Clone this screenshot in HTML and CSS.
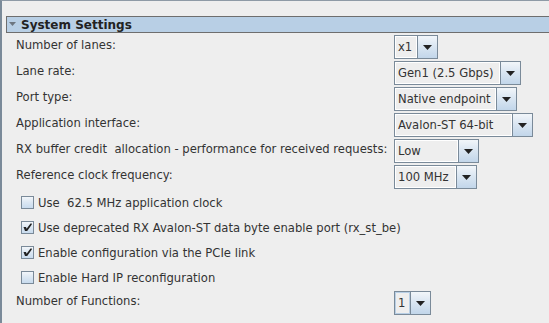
FILE: index.html
```html
<!DOCTYPE html>
<html>
<head>
<meta charset="utf-8">
<link rel="stylesheet" href="styles.css">
</head>
<body>
<div class="frame">
  <div class="section-header">
    <svg class="caret" width="7" height="4" viewBox="0 0 7 4"><polygon points="0,0 7,0 3.5,4" fill="#6d7680"/></svg>
    <span class="section-title">System Settings</span>
  </div>
  <div class="form">
    <div class="row">
      <span class="label">Number of lanes:</span>
      <div class="combo"><span class="combo-value w-lanes">x1</span><span class="combo-btn"><svg width="9" height="5" viewBox="0 0 9 5"><polygon points="0,0 9,0 4.5,5" fill="#222"/></svg></span></div>
    </div>
    <div class="row">
      <span class="label">Lane rate:</span>
      <div class="combo"><span class="combo-value w-rate">Gen1 (2.5 Gbps)</span><span class="combo-btn"><svg width="9" height="5" viewBox="0 0 9 5"><polygon points="0,0 9,0 4.5,5" fill="#222"/></svg></span></div>
    </div>
    <div class="row">
      <span class="label">Port type:</span>
      <div class="combo"><span class="combo-value w-port">Native endpoint</span><span class="combo-btn"><svg width="9" height="5" viewBox="0 0 9 5"><polygon points="0,0 9,0 4.5,5" fill="#222"/></svg></span></div>
    </div>
    <div class="row">
      <span class="label">Application interface:</span>
      <div class="combo"><span class="combo-value w-app">Avalon-ST 64-bit</span><span class="combo-btn"><svg width="9" height="5" viewBox="0 0 9 5"><polygon points="0,0 9,0 4.5,5" fill="#222"/></svg></span></div>
    </div>
    <div class="row">
      <span class="label">RX buffer credit&nbsp; allocation - performance for received requests:</span>
      <div class="combo"><span class="combo-value w-low">Low</span><span class="combo-btn"><svg width="9" height="5" viewBox="0 0 9 5"><polygon points="0,0 9,0 4.5,5" fill="#222"/></svg></span></div>
    </div>
    <div class="row">
      <span class="label">Reference clock frequency:</span>
      <div class="combo"><span class="combo-value w-clk">100 MHz</span><span class="combo-btn"><svg width="9" height="5" viewBox="0 0 9 5"><polygon points="0,0 9,0 4.5,5" fill="#222"/></svg></span></div>
    </div>
  </div>
  <div class="checks">
    <label class="check-row"><span class="checkbox"></span><span class="check-text">Use&nbsp; 62.5 MHz application clock</span></label>
    <label class="check-row"><span class="checkbox"><svg width="11" height="11" viewBox="0 0 11 11"><path d="M1.5 5 L4 5 L4.6 6.8 L8.5 1.5 L9.8 1.5 L9.8 2.6 L5.2 9 L3 9 Z" fill="#222"/></svg></span><span class="check-text">Use deprecated RX Avalon-ST data byte enable port (rx_st_be)</span></label>
    <label class="check-row"><span class="checkbox"><svg width="11" height="11" viewBox="0 0 11 11"><path d="M1.5 5 L4 5 L4.6 6.8 L8.5 1.5 L9.8 1.5 L9.8 2.6 L5.2 9 L3 9 Z" fill="#222"/></svg></span><span class="check-text">Enable configuration via the PCIe link</span></label>
    <label class="check-row"><span class="checkbox"></span><span class="check-text">Enable Hard IP reconfiguration</span></label>
  </div>
  <div class="form last">
    <div class="row">
      <span class="label">Number of Functions:</span>
      <div class="combo"><span class="combo-value w-func focused">1</span><span class="combo-btn"><svg width="9" height="5" viewBox="0 0 9 5"><polygon points="0,0 9,0 4.5,5" fill="#222"/></svg></span></div>
    </div>
  </div>
</div>
</body>
</html>
```
FILE: styles.css
```css
html, body {
  margin: 0;
  padding: 0;
  background: #eeeeee;
}
body {
  width: 549px;
  height: 323px;
  overflow: hidden;
  font-family: "DejaVu Sans", sans-serif;
  font-size: 11.6px;
  color: #333333;
}
.frame {
  height: 323px;
  box-sizing: border-box;
  border-left: 2px solid #7a8a99;
  border-top: 1px solid #8e9aa6;
  padding-top: 15px;
}
.section-header {
  margin-left: 4px;
  height: 15px;
  border: 1px solid #6e6e6e;
  border-right: none;
  background: #b8cfe5;
  display: flex;
  align-items: center;
}
.caret {
  margin-left: 2px;
  margin-right: 5px;
  margin-top: -1px;
}
.section-title {
  font-weight: bold;
  color: #222;
  font-size: 12px;
}
.form {
  display: flex;
  flex-direction: column;
  padding-left: 14px;
  padding-top: 1px;
}
.row {
  display: grid;
  grid-template-columns: 378px auto;
  align-items: center;
  height: 26px;
}
.label {
  white-space: nowrap;
  padding-bottom: 5px;
}
.combo {
  display: flex;
  height: 24px;
  box-sizing: border-box;
  border: 1px solid #7a8a99;
  justify-self: start;
}
.combo-value {
  box-sizing: border-box;
  border: 1px solid #ffffff;
  padding-left: 2px;
  display: flex;
  align-items: center;
  white-space: nowrap;
  background: #eeeeee;
}
.combo-value.focused {
  border-color: #b8cfe5;
}
.w-lanes { width: 22px; }
.w-rate { width: 105px; }
.w-port { width: 101px; }
.w-app { width: 117px; }
.w-low { width: 63px; }
.w-clk { width: 61px; }
.w-func { width: 15px; }
.combo-btn {
  width: 19px;
  border-left: 1px solid #7a8a99;
  background: linear-gradient(#f2f6fa, #dde8f3 40%, #c2d6ea);
  display: flex;
  align-items: center;
  justify-content: center;
}
.checks {
  display: flex;
  flex-direction: column;
  padding-left: 19px;
  padding-top: 0;
}
.check-row {
  display: flex;
  align-items: center;
  height: 25px;
}
.checkbox {
  width: 13px;
  height: 13px;
  box-sizing: border-box;
  border: 1px solid #7a8a99;
  background: linear-gradient(#f2f6fa, #dde8f3 45%, #c8dbee);
  margin-right: 4px;
  display: flex;
  align-items: center;
  justify-content: center;
}
.form.last {
  padding-top: 0;
}
```
